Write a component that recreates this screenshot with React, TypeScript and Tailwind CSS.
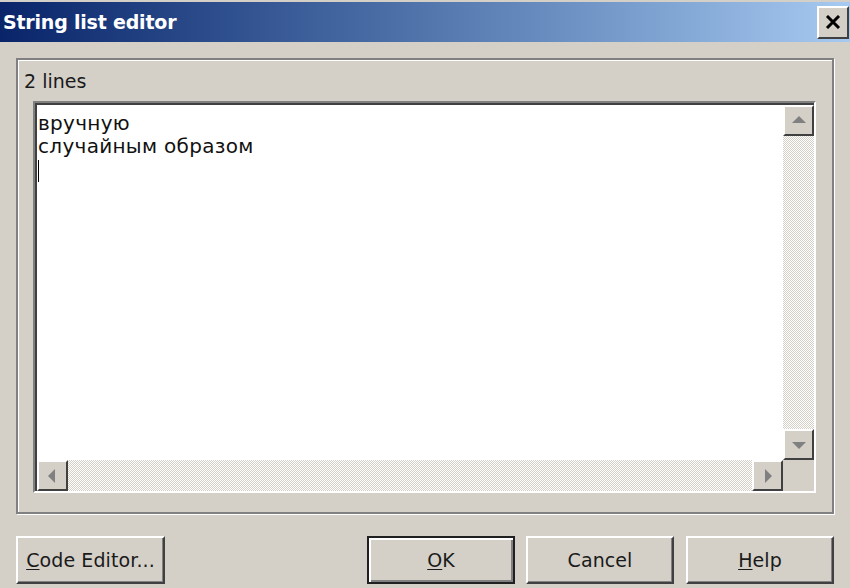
import React from "react";

const font = { fontFamily: '"DejaVu Sans", Verdana, sans-serif' };

const ScrollBtn = ({ dir }: { dir: "up" | "down" | "left" | "right" }) => {
  const tri: Record<string, string> = {
    up: "M4 13 L11 6 L18 13 Z",
    down: "M4 8 L11 15 L18 8 Z",
    left: "M13 4 L6 11 L13 18 Z",
    right: "M8 4 L15 11 L8 18 Z",
  };
  return (
    <div className="w-[31px] h-[31px] shrink-0 bg-[#d4d0c8] border-t-2 border-l-2 border-t-[#ffffff] border-l-[#ffffff] border-b-2 border-r-2 border-b-[#404040] border-r-[#404040] flex items-center justify-center">
      <svg width="22" height="22" viewBox="0 0 22 22">
        <path d={tri[dir]} fill="#808080" />
      </svg>
    </div>
  );
};

const Button = ({
  children,
  wide,
  isDefault,
}: {
  children: React.ReactNode;
  wide?: string;
  isDefault?: boolean;
}) => (
  <div
    className={`${wide} h-[48px] flex items-center justify-center bg-[#d4d0c8] text-[19px] tracking-[0.1px] text-[#1a1a1a] ${
      isDefault
        ? "border-2 border-[#202020] shadow-[inset_2px_2px_0_#ffffff,inset_-2px_-2px_0_#808080]"
        : "border-t-2 border-l-2 border-t-[#ffffff] border-l-[#ffffff] border-b-2 border-r-2 border-b-[#404040] border-r-[#404040] shadow-[inset_-1px_-1px_0_#808080]"
    }`}
  >
    {children}
  </div>
);

export default function App() {
  return (
    <div
      className="w-[850px] h-[588px] bg-[#d4d0c8] overflow-hidden flex flex-col"
      style={font}
    >
      {/* Title bar */}
      <div className="h-[40px] mt-[2px] flex items-center justify-between bg-gradient-to-r from-[#0a246a] to-[#a6caf0] pl-[3px] pr-[1px]">
        <span className="text-white font-bold text-[19px] tracking-[-0.2px]">String list editor</span>
        <div className="w-[32px] h-[33px] bg-[#d4d0c8] border-t-2 border-l-2 border-t-[#ffffff] border-l-[#ffffff] border-b-2 border-r-2 border-b-[#404040] border-r-[#404040] flex items-center justify-center">
          <svg width="16" height="14" viewBox="0 0 16 14">
            <path d="M2 1 L14 13 M14 1 L2 13" stroke="#000" strokeWidth="3" />
          </svg>
        </div>
      </div>

      <div className="flex-1 flex flex-col px-[16px] pt-[16px]">
        {/* Group box */}
        <div className="h-[456px] border-2 border-[#808080] shadow-[inset_1px_1px_0_#ffffff,1px_1px_0_#ffffff] pl-[6px] pr-[16px] pt-[10px] flex flex-col">
          <div className="text-[19px] text-[#1a1a1a] leading-[22px] mb-[9px]">2 lines</div>

          {/* Memo */}
          <div className="ml-[9px] h-[392px] border-t-2 border-l-2 border-t-[#808080] border-l-[#808080] border-b-2 border-r-2 border-b-[#ffffff] border-r-[#ffffff] flex flex-col">
            <div className="flex-1 border-t-[2px] border-l-[2px] border-[#404040] flex flex-col border-r-0 border-b-0">
              <div className="flex flex-1">
                <div className="flex-1 bg-white pl-[1px] pt-[7px] text-[20px] tracking-[0.3px] leading-[23px] text-[#111]">
                  <div>вручную</div>
                  <div>случайным образом</div>
                  <div className="w-[1px] h-[22px] bg-black mt-[2px]" />
                </div>
                <div className="w-[31px] flex flex-col bg-[repeating-conic-gradient(#ffffff_0_25%,#d4d0c8_0_50%)] bg-[length:2px_2px]">
                  <ScrollBtn dir="up" />
                  <div className="flex-1" />
                  <ScrollBtn dir="down" />
                </div>
              </div>
              <div className="flex h-[31px]">
                <div className="flex-1 flex bg-[repeating-conic-gradient(#ffffff_0_25%,#d4d0c8_0_50%)] bg-[length:2px_2px]">
                  <ScrollBtn dir="left" />
                  <div className="flex-1" />
                  <ScrollBtn dir="right" />
                </div>
                <div className="w-[31px] bg-[#d4d0c8]" />
              </div>
            </div>
          </div>
        </div>

        {/* Buttons */}
        <div className="flex mt-[22px] items-start">
          <Button wide="w-[149px]">
            <span>
              <span className="underline underline-offset-2">C</span>ode Editor...
            </span>
          </Button>
          <div className="flex-1" />
          <Button wide="w-[148px]" isDefault>
            <span>
              <span className="underline underline-offset-2">O</span>K
            </span>
          </Button>
          <div className="w-[11px]" />
          <Button wide="w-[148px]">Cancel</Button>
          <div className="w-[12px]" />
          <Button wide="w-[148px]">
            <span>
              <span className="underline underline-offset-2">H</span>elp
            </span>
          </Button>
        </div>
      </div>
    </div>
  );
}
